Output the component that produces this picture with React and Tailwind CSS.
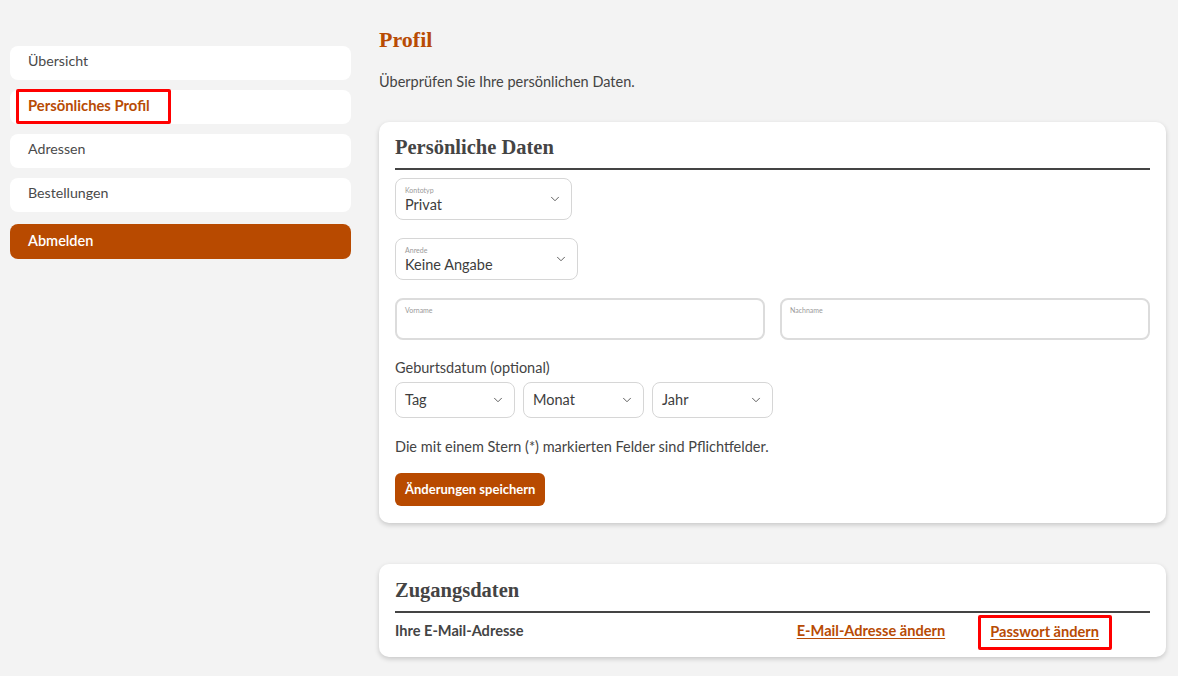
import { ChevronDown } from 'lucide-react';

const body = { fontFamily: 'Lato, "Open Sans", sans-serif' };
const serif = { fontFamily: '"Liberation Serif", "DejaVu Serif", serif' };

function Select(props) {
  return (
    <div className={`relative flex items-center justify-between border border-[#d6d6d6] rounded-lg bg-white pl-[9px] pr-[9px] ${props.className}`}>
      <div className="flex flex-col">
        {props.label && <span className="text-[7px] leading-[8px] text-[#9a9a9a] mb-[3px]">{props.label}</span>}
        <span className="text-[14.5px] leading-[16px] text-[#3d3d3d]">{props.value}</span>
      </div>
      <ChevronDown size={14} strokeWidth={1.6} className="text-[#555]" />
    </div>
  );
}

function Field(props) {
  return (
    <div className="flex-1 h-[42px] border-2 border-[#dcdcdc] rounded-lg bg-white px-[8px] pt-[6px]">
      <span className="block text-[7px] leading-[8px] text-[#9a9a9a]">{props.label}</span>
    </div>
  );
}

function App() {
  const menu = ['Übersicht', 'Persönliches Profil', 'Adressen', 'Bestellungen'];

  return (
    <div className="min-h-screen w-full bg-[#f3f3f3] flex" style={body}>
      <aside className="ml-[10px] mt-[46px] w-[341px] flex flex-col gap-[10px]">
        {menu.map((item) => (
          <div key={item} className="relative h-[34px] bg-white rounded-lg flex items-center px-[18px] pb-[4px]">
            {item === 'Persönliches Profil' ? (
              <>
                <span className="text-[14.8px] font-bold text-[#b84b04]">{item}</span>
                <div className="absolute left-[6px] top-[-1px] w-[155px] h-[35px] border-[3px] border-[#ff0000] rounded-[2px]" />
              </>
            ) : (
              <span className="text-[14.2px] text-[#4a4a4a]">{item}</span>
            )}
          </div>
        ))}
        <div className="h-[35px] bg-[#b84a00] rounded-lg flex items-center px-[18px] mt-[2px] pb-[2px]">
          <span className="text-[14.5px] font-semibold text-white">Abmelden</span>
        </div>
      </aside>

      <main className="ml-[28px] w-[787px] pt-[26px]">
        <h1 className="text-[22px] leading-[28px] font-bold text-[#b84b04]" style={serif}>Profil</h1>
        <p className="mt-[19px] text-[14.5px] leading-[18px] text-[#444]">Überprüfen Sie Ihre persönlichen Daten.</p>

        <section className="mt-[31px] bg-white rounded-[10px] shadow-[0_2px_5px_rgba(0,0,0,0.18)] px-[16px] pt-[12px] pb-[17px]">
          <h2 className="text-[20.5px] leading-[26px] font-bold text-[#444]" style={serif}>Persönliche Daten</h2>
          <div className="mt-[8px] h-[2px] bg-[#444]" />

          <Select label="Kontotyp" value="Privat" className="mt-[8px] w-[177px] h-[42px]" />
          <Select label="Anrede" value="Keine Angabe" className="mt-[18px] w-[183px] h-[42px]" />

          <div className="mt-[18px] flex gap-[15px]">
            <Field label="Vorname" />
            <Field label="Nachname" />
          </div>

          <p className="mt-[19px] text-[14.5px] leading-[18px] text-[#444]">Geburtsdatum (optional)</p>
          <div className="mt-[5px] flex gap-[8px]">
            <Select value="Tag" className="w-[120px] h-[36px]" />
            <Select value="Monat" className="w-[121px] h-[36px]" />
            <Select value="Jahr" className="w-[121px] h-[36px]" />
          </div>

          <p className="mt-[20px] text-[14.5px] leading-[18px] text-[#444]">Die mit einem Stern (*) markierten Felder sind Pflichtfelder.</p>

          <button className="mt-[17px] h-[33px] px-[10px] bg-[#b84a00] rounded-md text-white text-[13px] font-bold">
            Änderungen speichern
          </button>
        </section>

        <section className="mt-[41px] bg-white rounded-[10px] shadow-[0_2px_5px_rgba(0,0,0,0.18)] px-[16px] pt-[13px] pb-[14px]">
          <h2 className="text-[20.5px] leading-[26px] font-bold text-[#444]" style={serif}>Zugangsdaten</h2>
          <div className="mt-[8px] h-[2px] bg-[#444]" />
          <div className="mt-[6px] flex items-center h-[24px]">
            <span className="text-[14.6px] font-bold text-[#444]">Ihre E-Mail-Adresse</span>
            <a className="ml-auto text-[14.6px] font-bold text-[#b84b04] underline underline-offset-2">E-Mail-Adresse ändern</a>
            <div className="relative ml-[45px] mr-[51px]">
              <a className="text-[14.6px] font-bold text-[#b84b04] underline underline-offset-2">Passwort ändern</a>
              <div className="absolute left-[-12px] right-[-13px] top-[-4px] bottom-[-7px] border-[3px] border-[#ff0000] rounded-[2px]" />
            </div>
          </div>
        </section>
      </main>
    </div>
  );
}

export default App;
